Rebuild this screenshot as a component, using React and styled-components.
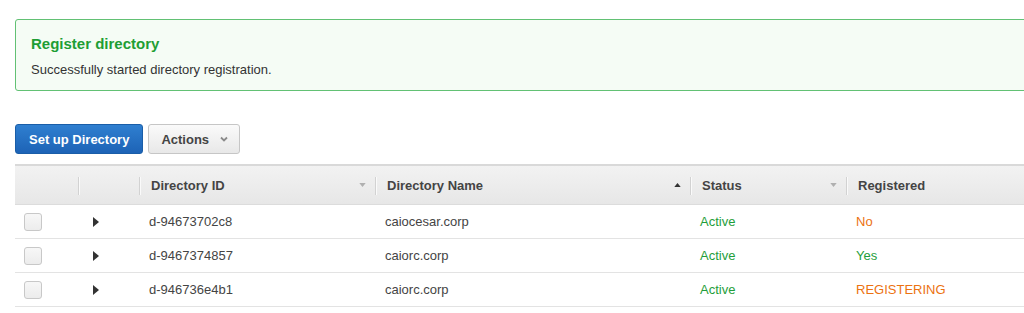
import React from "react";
import styled, { createGlobalStyle } from "styled-components";

const GlobalStyle = createGlobalStyle`
  html, body {
    margin: 0;
    padding: 0;
    background: #fff;
    font-family: "Liberation Sans", Arial, sans-serif;
    color: #444;
    overflow: hidden;
  }
`;

const rows = [
  { id: "d-94673702c8", name: "caiocesar.corp", status: "Active", registered: "No", regTone: "warn" },
  { id: "d-9467374857", name: "caiorc.corp", status: "Active", registered: "Yes", regTone: "ok" },
  { id: "d-946736e4b1", name: "caiorc.corp", status: "Active", registered: "REGISTERING", regTone: "warn" },
];

const columns = [
  { key: "check", label: "" },
  { key: "expand", label: "" },
  { key: "id", label: "Directory ID", sort: "down" },
  { key: "name", label: "Directory Name", sort: "up" },
  { key: "status", label: "Status", sort: "down" },
  { key: "registered", label: "Registered" },
];

const SortArrow = ({ dir }) => (
  <SortIcon viewBox="0 0 8 5" $dir={dir}>
    {dir === "up" ? <path d="M0 5 L4 0 L8 5 Z" /> : <path d="M0 0 L8 0 L4 5 Z" />}
  </SortIcon>
);

const App = () => {
  return (
    <>
      <GlobalStyle />
      <Page>
        <Banner>
          <BannerTitle>Register directory</BannerTitle>
          <BannerText>Successfully started directory registration.</BannerText>
        </Banner>

        <Toolbar>
          <Button $primary>Set up Directory</Button>
          <Button>
            Actions
            <svg width="8" height="6" viewBox="0 0 8 6">
              <path d="M1 1.5 L4 4.5 L7 1.5" fill="none" stroke="#8a8a8a" strokeWidth="1.8" />
            </svg>
          </Button>
        </Toolbar>

        <Table>
          <HeaderRow>
            {columns.map((col, i) => (
              <HeadCell key={col.key} $first={i === 0}>
                <span>{col.label}</span>
                {col.sort && <SortArrow dir={col.sort} />}
              </HeadCell>
            ))}
          </HeaderRow>
          {rows.map((row) => (
            <Row key={row.id}>
              <Cell $pad="9px">
                <Checkbox />
              </Cell>
              <Cell $pad="15px">
                <Caret />
              </Cell>
              <Cell>{row.id}</Cell>
              <Cell>{row.name}</Cell>
              <Cell $tone="ok">{row.status}</Cell>
              <Cell $tone={row.regTone}>{row.registered}</Cell>
            </Row>
          ))}
        </Table>
      </Page>
    </>
  );
};

export default App;

const tones = {
  ok: "#1f9e3b",
  warn: "#ec7211",
};

const Page = styled.div`
  padding: 19px 0 0 15px;
  width: 1200px;
`;

const Banner = styled.div`
  border: 1px solid #62c174;
  border-radius: 3px;
  background: #f5fcf5;
  padding: 14px 15px 11px;
`;

const BannerTitle = styled.div`
  font-size: 15px;
  font-weight: bold;
  line-height: 20px;
  color: #1e9e34;
  margin-bottom: 7px;
`;

const BannerText = styled.div`
  font-size: 13px;
  line-height: 18px;
  color: #333;
`;

const Toolbar = styled.div`
  display: flex;
  gap: 5px;
  margin-top: 33px;
`;

const Button = styled.button`
  display: flex;
  align-items: center;
  gap: 11px;
  height: 30px;
  padding: 0 ${(p) => (p.$primary ? "13px" : "11px 0 12px")};
  font-family: "Liberation Sans", Arial, sans-serif;
  font-size: 13px;
  font-weight: bold;
  border-radius: 3px;
  cursor: pointer;
  color: ${(p) => (p.$primary ? "#fff" : "#444")};
  border: 1px solid ${(p) => (p.$primary ? "#1a5ea8" : "#c6c6c6")};
  background: ${(p) =>
    p.$primary
      ? "linear-gradient(#2f7fd0, #1d63b6)"
      : "linear-gradient(#fafafa, #e8e8e8)"};
`;

const Table = styled.div`
  margin-top: 10px;
  border-top: 2px solid #d9d9d9;
`;

const grid = `
  display: grid;
  grid-template-columns: 63px 61px 236px 315px 156px 1fr;
`;

const HeaderRow = styled.div`
  ${grid}
  height: 38px;
  background: linear-gradient(#f2f2f2, #e7e7e7);
  border-bottom: 1px solid #dcdcdc;
`;

const HeadCell = styled.div`
  position: relative;
  display: flex;
  align-items: center;
  justify-content: space-between;
  padding: 0 9px 0 12px;
  font-size: 13px;
  font-weight: bold;
  color: #444;

  &::before {
    content: "";
    display: ${(p) => (p.$first ? "none" : "block")};
    position: absolute;
    left: 0;
    top: 11px;
    bottom: 9px;
    width: 1px;
    background: #d2d2d2;
    box-shadow: 1px 0 0 #fafafa;
  }
`;

const SortIcon = styled.svg`
  width: 7px;
  height: 4px;
  fill: ${(p) => (p.$dir === "up" ? "#333" : "#b0b0b0")};
`;

const Row = styled.div`
  ${grid}
  height: 33px;
  border-bottom: 1px solid #e3e3e3;
`;

const Cell = styled.div`
  display: flex;
  align-items: center;
  padding-left: ${(p) => p.$pad || "10px"};
  font-size: 13px;
  color: ${(p) => (p.$tone ? tones[p.$tone] : "#444")};
`;

const Checkbox = styled.span`
  width: 16px;
  height: 16px;
  border: 1px solid #c8c8c8;
  border-radius: 3px;
  background: linear-gradient(#f7f7f7, #ececec);
`;

const Caret = styled.span`
  width: 0;
  height: 0;
  border-top: 5px solid transparent;
  border-bottom: 5px solid transparent;
  border-left: 6px solid #333;
`;
